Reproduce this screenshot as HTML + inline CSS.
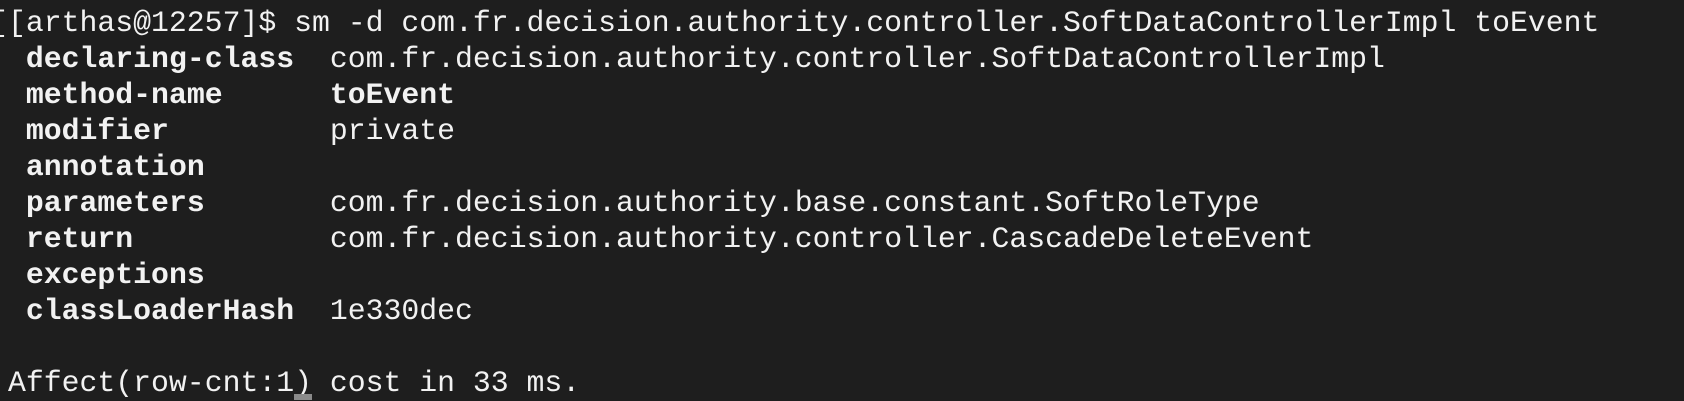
<!DOCTYPE html>
<html><head><meta charset="utf-8"><style>
html,body{margin:0;padding:0;background:#1e1e1e;width:1684px;height:400px;overflow:hidden}
pre{margin:0;position:absolute;left:8px;top:5px;font-family:"Liberation Mono",monospace;font-size:29.8px;line-height:36px;color:#f2f2f2;white-space:pre}
b{font-weight:bold}
.l1{position:relative;left:-17.9px}
.cur{position:absolute;left:294px;top:394px;width:18px;height:6px;background:#8a8a8a}
</style></head><body>
<pre><span class="l1">[[arthas@12257]$ sm -d com.fr.decision.authority.controller.SoftDataControllerImpl toEvent</span>
 <b>declaring-class</b>  com.fr.decision.authority.controller.SoftDataControllerImpl
 <b>method-name</b>      <b>toEvent</b>
 <b>modifier</b>         private
 <b>annotation</b>
 <b>parameters</b>       com.fr.decision.authority.base.constant.SoftRoleType
 <b>return</b>           com.fr.decision.authority.controller.CascadeDeleteEvent
 <b>exceptions</b>
 <b>classLoaderHash</b>  1e330dec

Affect(row-cnt:1) cost in 33 ms.</pre>
<div class="cur"></div>
</body></html>
